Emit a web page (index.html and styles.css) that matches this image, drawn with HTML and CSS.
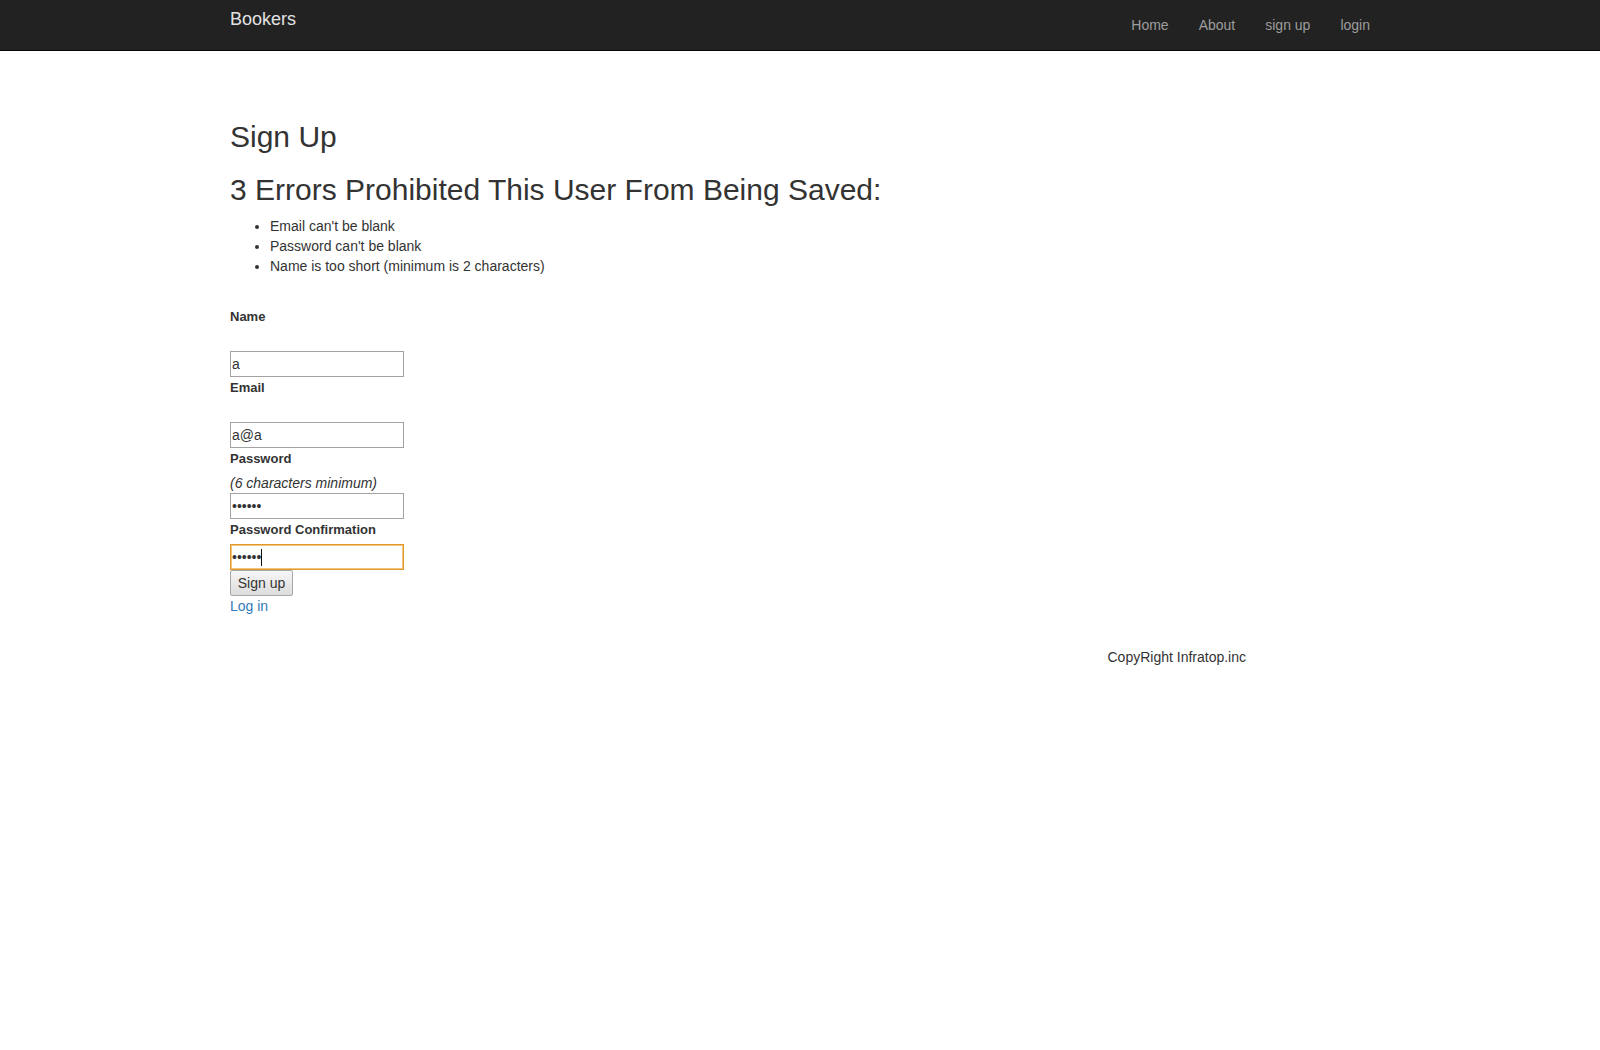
FILE: index.html
```html
<!DOCTYPE html>
<html lang="en">
<head>
<meta charset="utf-8">
<title>Bookers</title>
<link rel="stylesheet" href="styles.css">
</head>
<body>
<header class="navbar">
  <div class="container nav-inner">
    <a class="brand" href="#">Bookers</a>
    <ul class="nav-links">
      <li><a href="#">Home</a></li>
      <li><a href="#">About</a></li>
      <li><a href="#">sign up</a></li>
      <li><a href="#">login</a></li>
    </ul>
  </div>
</header>
<main class="container main">
  <h2 class="title">Sign Up</h2>
  <form class="signup">
    <div class="errors">
      <h2 class="title">3 Errors Prohibited This User From Being Saved:</h2>
      <ul class="error-list">
        <li>Email can't be blank</li>
        <li>Password can't be blank</li>
        <li>Name is too short (minimum is 2 characters)</li>
      </ul>
    </div>
    <div class="field">
      <label class="lbl">Name</label>
      <div class="spacer"></div>
      <input class="inp" type="text" value="a">
    </div>
    <div class="field">
      <label class="lbl">Email</label>
      <div class="spacer"></div>
      <input class="inp" type="text" value="a@a">
    </div>
    <div class="field">
      <label class="lbl">Password</label>
      <em class="hint">(6 characters minimum)</em>
      <input class="inp" type="password" value="aaaaaa">
    </div>
    <div class="field">
      <label class="lbl">Password Confirmation</label>
      <div class="inp-wrap">
        <input class="inp inp-focus" type="password" value="aaaaaa">
        <span class="caret"></span>
      </div>
    </div>
    <div class="actions">
      <button type="button" class="btn">Sign up</button>
    </div>
    <a class="login-link" href="#">Log in</a>
  </form>
</main>
<footer class="container footer">
  <div class="footer-row">
    <p class="copy">CopyRight Infratop.inc</p>
  </div>
</footer>
</body>
</html>
```
FILE: styles.css
```css
* { box-sizing: border-box; }
html, body { margin: 0; padding: 0; }
body {
  font-family: "Liberation Sans", Arial, Helvetica, sans-serif;
  font-size: 14px;
  line-height: 20px;
  color: #333;
  background: #fff;
}
a { text-decoration: none; }

.container {
  width: 1170px;
  margin: 0 auto;
  padding: 0 15px;
}

/* navbar */
.navbar {
  background: #222;
  border-bottom: 1px solid #080808;
  height: 51px;
}
.nav-inner {
  display: flex;
  justify-content: space-between;
  align-items: flex-start;
  height: 50px;
}
.brand {
  display: block;
  margin-left: -15px;
  padding: 9px 15px;
  font-size: 18px;
  line-height: 20px;
  color: #e2e2e2;
}
.nav-links {
  display: flex;
  list-style: none;
  margin: 0 -15px 0 0;
  padding: 0;
}
.nav-links a {
  display: block;
  padding: 15px;
  line-height: 20px;
  color: #9d9d9d;
}

/* main */
.main { padding-top: 49px; }
.title {
  font-size: 30px;
  line-height: 33px;
  font-weight: 400;
  margin: 20px 0 10px;
  color: #333;
}
.error-list {
  margin: 0 0 30px;
  padding-left: 40px;
}
.field { display: block; }
.lbl {
  display: block;
  font-size: 13px;
  font-weight: 700;
  line-height: 20px;
  padding-top: 1px;
  height: 21px;
  margin-bottom: 4px;
}
.spacer { height: 20px; }
.hint {
  display: block;
  font-style: italic;
  line-height: 20px;
}
.inp {
  display: block;
  width: 174px;
  height: 26px;
  margin: 0;
  padding: 1px 2px 1px 1px;
  border: 1px solid #a3a3a3;
  font: inherit;
  font-size: 14px;
  color: #333;
  background: #fff;
}
.inp-wrap { position: relative; width: 174px; }
.inp-focus {
  border: 1px solid #e09a2c;
  outline: 1px solid #f2c47c;
  outline-offset: -2px;
}
.caret {
  position: absolute;
  left: 31px;
  top: 5px;
  width: 1px;
  height: 17px;
  background: #111;
}
.actions { display: block; }
.btn {
  display: block;
  height: 26px;
  width: 63px;
  padding: 0;
  margin: 0;
  font: inherit;
  font-size: 14px;
  color: #333;
  border: 1px solid #a8a8a8;
  border-radius: 2px;
  background: linear-gradient(#f6f6f6, #dcdcdc);
}
.login-link {
  display: inline-block;
  color: #337ab7;
  line-height: 20px;
}

/* footer */
.footer { margin-top: 31px; }
.footer-row {
  display: grid;
  grid-template-columns: repeat(12, 1fr);
  margin: 0 -15px;
}
.copy {
  grid-column: 10 / span 3;
  padding: 0 15px;
  margin: 0;
  line-height: 20px;
}
```
